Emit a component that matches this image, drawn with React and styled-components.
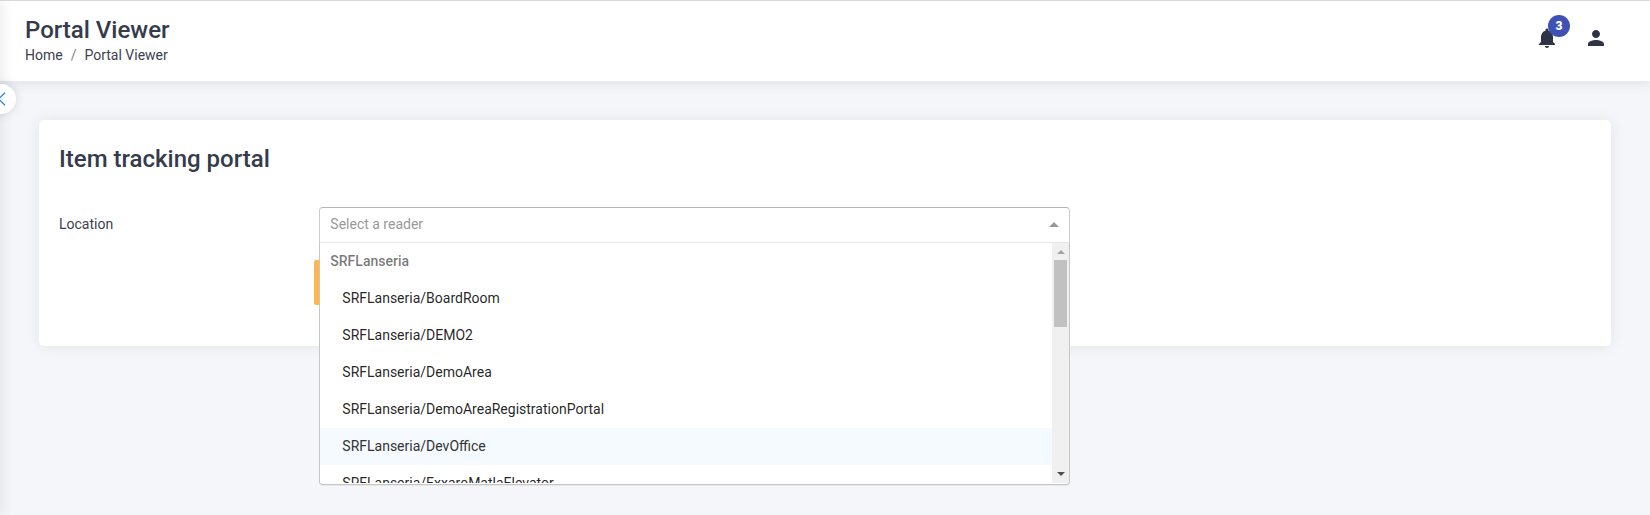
import React, { useState } from "react";
import styled, { createGlobalStyle } from "styled-components";

const GlobalStyle = createGlobalStyle`
  *, *::before, *::after { box-sizing: border-box; }
  body {
    margin: 0;
    background: #f5f6fa;
    color: #3b3f4f;
    font-family: Roboto, "Liberation Sans", sans-serif;
    font-size: 14px;
    line-height: 20px;
  }
  button, input { font: inherit; color: inherit; }
`;

const Page = styled.div`
  position: relative;
  min-height: 100vh;
  overflow-x: hidden;
`;

const SidebarShadow = styled.div`
  position: absolute;
  z-index: 2;
  top: 0;
  bottom: 0;
  left: -10px;
  width: 10px;
  box-shadow: 0 0 15px rgba(0, 0, 0, 0.12);
`;

const SidebarToggle = styled.button`
  position: absolute;
  z-index: 3;
  top: 84px;
  left: -14px;
  width: 30px;
  height: 30px;
  padding: 0;
  border: 0;
  border-radius: 50%;
  background: #fff;
  box-shadow: 0 0 10px rgba(0, 0, 0, 0.14);
  color: #2684f5;
  cursor: pointer;

  svg { display: block; }
`;

const Header = styled.header`
  display: flex;
  justify-content: space-between;
  align-items: flex-start;
  min-height: 81px;
  padding: 14px 42px 16px 25px;
  border-top: 1px solid #d9d9d9;
  background: #fff;
  box-shadow: 0 0 15px rgba(0, 0, 0, 0.12);
`;

const PageTitle = styled.h1`
  margin: 0;
  color: #343b4c;
  font-size: 24px;
  font-weight: 500;
  line-height: 30px;
`;

const Breadcrumb = styled.ol`
  display: flex;
  gap: 8px;
  margin: 0;
  padding: 0;
  list-style: none;

  li + li::before {
    content: "/";
    padding-right: 8px;
    color: #7c8088;
  }
`;

const CrumbLink = styled.a`
  color: inherit;
  text-decoration: none;
`;

const Actions = styled.div`
  display: flex;
  gap: 25px;
  padding-top: 11px;
`;

const IconButton = styled.button`
  position: relative;
  width: 24px;
  height: 24px;
  padding: 0;
  border: 0;
  background: none;
  color: #2e3348;
  cursor: pointer;

  svg { display: block; }
`;

const Badge = styled.span`
  position: absolute;
  top: -11px;
  left: 13px;
  width: 22px;
  height: 22px;
  border-radius: 50%;
  background: #3f51b5;
  color: #fff;
  font-size: 12px;
  font-weight: 900;
  line-height: 22px;
  text-align: center;
`;

const Main = styled.main`
  padding: 39px;
`;

const Card = styled.section`
  min-height: 226px;
  padding: 24px 20px 41px;
  border-radius: 5px;
  background: #fff;
  box-shadow: 0 0 15px rgba(0, 0, 0, 0.08);
`;

const CardTitle = styled.h2`
  margin: 0 0 33px;
  color: #343b4c;
  font-size: 24px;
  font-weight: 500;
  line-height: 30px;
`;

const Row = styled.div`
  display: flex;
  margin: 0 -15px;
`;

const Column = styled.div`
  flex: 0 0 calc(100% * ${(p) => p.$span} / 12);
  margin-left: calc(100% * ${(p) => p.$offset || 0} / 12);
  padding: 0 ${(p) => p.$gutter ?? 15}px;
`;

const FieldLabel = styled.label`
  display: block;
  padding-top: 7px;
`;

const Picker = styled.div`
  position: relative;
  margin-bottom: 17px;
`;

const PickerBox = styled.div`
  display: flex;
  align-items: center;
  height: 36px;
  padding: 0 10px 2px;
  border: 1px solid;
  border-color: #b3b3b3 #ccc #e6e6e6 #ccc;
  border-radius: ${(p) => (p.$open ? "4px 4px 0 0" : "4px")};
  background: #fff;
`;

const PickerInput = styled.input`
  flex: 1;
  min-width: 0;
  height: 20px;
  padding: 0;
  border: 0;
  outline: 0;
  background: none;
  line-height: 20px;

  &::placeholder { color: #999; opacity: 1; }
`;

const PickerArrow = styled.button`
  width: 10px;
  height: 20px;
  padding: 0;
  border: 0;
  background: none;
  color: #999;
  cursor: pointer;

  svg { display: block; transform: ${(p) => (p.$open ? "none" : "rotate(180deg)")}; }
`;

const Panel = styled.div`
  position: absolute;
  z-index: 1;
  top: 100%;
  left: 0;
  right: 0;
  display: flex;
  padding-bottom: 1px;
  border: 1px solid #c6c6c6;
  border-top: 0;
  border-radius: 0 0 4px 4px;
  background: #fff;
  box-shadow: 0 1px 0 rgba(0, 0, 0, 0.06);
`;

const OptionList = styled.ul`
  flex: 1;
  height: 240px;
  margin: 0;
  padding: 0;
  overflow-y: auto;
  list-style: none;
  scrollbar-width: none;
`;

const GroupLabel = styled.li`
  height: 37px;
  padding: 8px 10px;
  color: rgba(0, 0, 0, 0.54);
  font-weight: 500;
`;

const Option = styled.li`
  height: 37px;
  padding: 8px 10px 8px 22px;
  background: ${(p) => (p.$marked ? "#f5faff" : "#fff")};
  color: ${(p) => (p.$marked ? "#333" : "rgba(0, 0, 0, 0.87)")};
  cursor: pointer;
`;

const ScrollTrack = styled.div`
  display: flex;
  flex-direction: column;
  width: 17px;
  background: #f0f0f0;
`;

const ScrollStep = styled.button`
  display: grid;
  place-items: center;
  height: 17px;
  padding: ${(p) => (p.$atEnd ? "1px 0 0 1px" : "0 0 1px 1px")};
  border: 0;
  background: none;
  color: ${(p) => (p.$atEnd ? "#a3a3a3" : "#505050")};

  svg { display: block; }
`;

const ScrollThumb = styled.div`
  height: 67px;
  margin: 0 2px auto;
  background: #c1c1c1;
`;

const SubmitButton = styled.button`
  display: block;
  width: 120px;
  height: 45px;
  border: 0;
  border-radius: 2px;
  background: #ffb74d;
  color: #fff;
`;

const readers = [
  "SRFLanseria/BoardRoom",
  "SRFLanseria/DEMO2",
  "SRFLanseria/DemoArea",
  "SRFLanseria/DemoAreaRegistrationPortal",
  "SRFLanseria/DevOffice",
  "SRFLanseria/ExxaroMatlaElevator",
];

function Triangle({ width, height, down }) {
  const d = down
    ? `M0 0H${width}L${width / 2} ${height}Z`
    : `M0 ${height}H${width}L${width / 2} 0Z`;
  return (
    <svg width={width} height={height} viewBox={`0 0 ${width} ${height}`} aria-hidden="true">
      <path d={d} fill="currentColor" />
    </svg>
  );
}

function ReaderPicker({ id }) {
  const [open, setOpen] = useState(true);
  const [marked, setMarked] = useState("SRFLanseria/DevOffice");
  const [value, setValue] = useState("");
  return (
    <Picker>
      <PickerBox $open={open}>
        <PickerInput
          id={id}
          role="combobox"
          aria-expanded={open}
          aria-controls="reader-list"
          placeholder="Select a reader"
          value={value}
          onChange={(e) => setValue(e.target.value)}
        />
        <PickerArrow type="button" aria-label="Toggle readers" $open={open} onClick={() => setOpen(!open)}>
          <Triangle width={10} height={5} />
        </PickerArrow>
      </PickerBox>
      {open && (
        <Panel>
          <OptionList id="reader-list" role="listbox" aria-label="Readers">
            <GroupLabel role="presentation">SRFLanseria</GroupLabel>
            {readers.map((name) => (
              <Option
                key={name}
                role="option"
                aria-selected={name === value}
                $marked={name === marked}
                onMouseEnter={() => setMarked(name)}
                onClick={() => {
                  setValue(name);
                  setOpen(false);
                }}
              >
                {name}
              </Option>
            ))}
          </OptionList>
          <ScrollTrack>
            <ScrollStep type="button" aria-label="Scroll up" $atEnd>
              <Triangle width={8} height={4} />
            </ScrollStep>
            <ScrollThumb />
            <ScrollStep type="button" aria-label="Scroll down">
              <Triangle width={8} height={4} down />
            </ScrollStep>
          </ScrollTrack>
        </Panel>
      )}
    </Picker>
  );
}

export default function App() {
  return (
    <Page>
      <GlobalStyle />
      <SidebarShadow />
      <SidebarToggle type="button" aria-label="Toggle sidebar">
        <svg width="30" height="30" viewBox="0 0 30 30" fill="none" stroke="currentColor" strokeWidth="1.3">
          <path d="M19 8.7L12.7 15L19 21.3" />
        </svg>
      </SidebarToggle>
      <Header>
        <div>
          <PageTitle>Portal Viewer</PageTitle>
          <nav aria-label="Breadcrumb">
            <Breadcrumb>
              <li><CrumbLink href="#home">Home</CrumbLink></li>
              <li><CrumbLink href="#portal">Portal Viewer</CrumbLink></li>
            </Breadcrumb>
          </nav>
        </div>
        <Actions>
          <IconButton type="button" aria-label="Notifications">
            <svg width="24" height="24" viewBox="0 0 24 24" fill="currentColor">
              <path d="M12 22c1.1 0 2-.9 2-2h-4c0 1.1.89 2 2 2zm6-6v-5c0-3.07-1.64-5.64-4.5-6.32V4c0-.83-.67-1.5-1.5-1.5s-1.5.67-1.5 1.5v.68C7.63 5.36 6 7.92 6 11v5l-2 2v1h16v-1l-2-2z" />
            </svg>
            <Badge>3</Badge>
          </IconButton>
          <IconButton type="button" aria-label="Account">
            <svg width="24" height="24" viewBox="0 0 24 24" fill="currentColor">
              <path d="M12 12c2.21 0 4-1.79 4-4s-1.79-4-4-4-4 1.79-4 4 1.79 4 4 4zm0 2c-2.67 0-8 1.34-8 4v2h16v-2c0-2.66-5.33-4-8-4z" />
            </svg>
          </IconButton>
        </Actions>
      </Header>
      <Main>
        <Card>
          <CardTitle>Item tracking portal</CardTitle>
          <Row>
            <Column $span={2}>
              <FieldLabel htmlFor="reader">Location</FieldLabel>
            </Column>
            <Column $span={6}>
              <ReaderPicker id="reader" />
            </Column>
          </Row>
          <Row>
            <Column $span={6} $offset={2} $gutter={10}>
              <SubmitButton type="submit" aria-label="Submit" />
            </Column>
          </Row>
        </Card>
      </Main>
    </Page>
  );
}
